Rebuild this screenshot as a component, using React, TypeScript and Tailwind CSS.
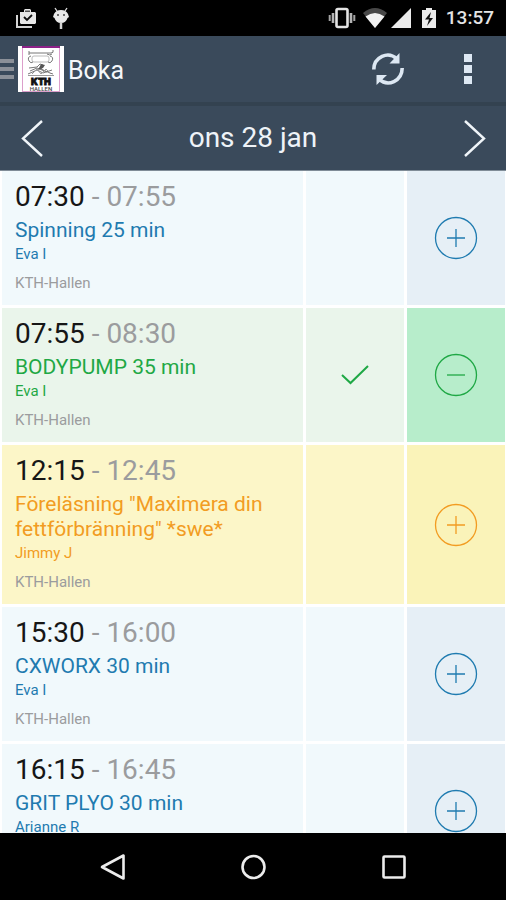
import React, { useState } from 'react';

type Status = 'open' | 'booked' | 'waiting';

interface Session {
  id: number;
  start: string;
  end: string;
  title: string;
  instructor: string;
  location: string;
  status: Status;
}

const initialSessions: Session[] = [
  { id: 1, start: '07:30', end: '07:55', title: 'Spinning 25 min', instructor: 'Eva I', location: 'KTH-Hallen', status: 'open' },
  { id: 2, start: '07:55', end: '08:30', title: 'BODYPUMP 35 min', instructor: 'Eva I', location: 'KTH-Hallen', status: 'booked' },
  { id: 3, start: '12:15', end: '12:45', title: 'Föreläsning "Maximera din fettförbränning" *swe*', instructor: 'Jimmy J', location: 'KTH-Hallen', status: 'waiting' },
  { id: 4, start: '15:30', end: '16:00', title: 'CXWORX 30 min', instructor: 'Eva I', location: 'KTH-Hallen', status: 'open' },
  { id: 5, start: '16:15', end: '16:45', title: 'GRIT PLYO 30 min', instructor: 'Arianne R', location: 'KTH-Hallen', status: 'open' },
];

const theme = {
  open: { cell: 'bg-[#f1f9fc]', action: 'bg-[#e6eff6]', text: 'text-[#1f7bb0]' },
  booked: { cell: 'bg-[#eaf5eb]', action: 'bg-[#b7edcb]', text: 'text-[#1fa845]' },
  waiting: { cell: 'bg-[#fcf6c8]', action: 'bg-[#faf3b9]', text: 'text-[#f29c22]' },
};

const StatusBar: React.FC = () => (
  <div className="h-9 shrink-0 bg-black flex items-center justify-between pl-4 pr-3">
    <div className="flex items-center gap-4">
      <svg width="20" height="20" viewBox="0 0 20 20">
        <path d="M1 7v12h15" fill="none" stroke="#d4d4d4" strokeWidth="2" />
        <path d="M4 4h4V2l1-1h5l1 1v2h4l1 1v10l-1 1H5l-1-1z" fill="#e8e8e8" />
        <path d="M9 4V2.500h5V4z" fill="#555" />
        <path d="M8 9l3 3 5-5" fill="none" stroke="#111" strokeWidth="1.800" />
      </svg>
      <svg width="18" height="24" viewBox="0 0 18 24">
        <path d="M3 2l2 3M15 2l-2 3" stroke="#e0e0e0" strokeWidth="1.300" />
        <path d="M2 8Q4 4 9 4t7 4l1 3-1.500 1Q14 17 9 17t-6.500-5L1 11z" fill="#e8e8e8" />
        <path d="M9 16v7" stroke="#d4d4d4" strokeWidth="2.500" />
        <circle cx="6" cy="9" r="1" fill="#444" />
        <circle cx="12" cy="9" r="1" fill="#444" />
      </svg>
    </div>
    <div className="flex items-center">
      <svg width="28" height="22" viewBox="0 0 28 22">
        <rect x="8.500" y="2" width="11" height="18" rx="1.500" fill="none" stroke="#e4e4e4" strokeWidth="2.600" />
        <path d="M5 6v10M23 6v10" stroke="#b4b4b4" strokeWidth="2.600" />
        <path d="M1.700 8v6M26.300 8v6" stroke="#a4a4a4" strokeWidth="2" />
      </svg>
      <svg className="ml-[7px]" width="24" height="22" viewBox="0 0 24 22">
        <path d="M0 6Q12-4 24 6L12 21z" fill="#484848" />
        <path d="M2.500 9.500Q12 2.500 21.500 9.500L12 21z" fill="#f2f2f2" />
      </svg>
      <svg className="ml-1" width="20" height="22" viewBox="0 0 20 22">
        <path d="M20 1v20H0z" fill="#ebebeb" />
      </svg>
      <svg className="ml-[11px]" width="14" height="22" viewBox="0 0 14 22">
        <path d="M0 3h4V1h6v2h4v18H0z" fill="#ebebeb" />
        <path d="M9 5L3 12.500h4L5 19 11 11H7.500z" fill="#111" />
      </svg>
      <span className="ml-2 w-[50px] text-right text-[19px] leading-6 font-medium text-[#e4e4e4]">13:57</span>
    </div>
  </div>
);

const Logo: React.FC = () => (
  <svg width="46" height="46" viewBox="0 0 46 46" className="shrink-0">
    <rect width="46" height="46" fill="#fff" />
    <path d="M4.500 1v44M41.500 1v44M4 45.500h38" stroke="#dc9fcb" fill="none" />
    <path d="M4 1h38" stroke="#8d2288" strokeWidth="2" />
    <g fill="none" stroke="#777" strokeWidth="1">
      <path d="M11 7h22q3 0 2-3M11 5v4M34 8q-2 2-5 0" />
      <rect x="14" y="10" width="17" height="6" rx="2" stroke="#bbb" />
      <path d="M13 10q-4 1-2 5 2 3 4 1M32 10q4 1 2 5-2 3-4 1" />
      <path d="M11 22l8-1 3-3 3 1-2 4 9 4 3 1M10 28l9-4 6 3 9-3M12 25l7-3 10 4" />
      <path d="M10 29.500h26M14 28l5-5 4 5 5-5 5 5" stroke="#999" />
    </g>
    <path d="M23 18l4 1-2 3-5 2z" fill="#555" />
    <text x="23" y="38.500" textAnchor="middle" fontFamily="Inter, sans-serif" fontSize="9" fontWeight="900" stroke="#111" strokeWidth=".800" fill="#111">KTH</text>
    <text x="23" y="45" textAnchor="middle" fontFamily="Roboto, sans-serif" fontSize="6" fontWeight="500" fill="#444">HALLEN</text>
  </svg>
);

const ActionBar: React.FC = () => (
  <header className="h-[70px] shrink-0 bg-[#3a4a5b] border-b-4 border-[#334250] flex items-center pr-3.5">
    <button type="button" aria-label="Meny" className="flex items-center gap-1">
      <svg width="14" height="22" viewBox="0 0 14 22">
        <path d="M0 3h14M0 11h14M0 19h14" stroke="#8b9098" strokeWidth="4" />
      </svg>
      <Logo />
    </button>
    <h1 className="ml-1 pt-1 flex-1 text-[25px] leading-8 text-[#f4f7fa]">Boka</h1>
    <button type="button" aria-label="Uppdatera" className="w-12 h-12 flex items-center justify-center">
      <svg width="34" height="34" viewBox="0 0 34 34">
        <g fill="none" stroke="#dde8f3" strokeWidth="3.600">
          <path d="M2.800 17.500C3 5 17-1.500 26 7" />
          <path d="M31.200 16C31 29 17 35.500 8 27" />
        </g>
        <path d="M28.500 1v10.500H18.500z" fill="#dde8f3" />
        <path d="M5.500 33V23H16z" fill="#dde8f3" />
      </svg>
    </button>
    <button type="button" aria-label="Fler alternativ" className="ml-8 w-12 h-12 flex items-center justify-center">
      <svg width="8" height="30" viewBox="0 0 8 30">
        <path d="M0 0h8v8H0zM0 11h8v8H0zM0 22h8v8H0z" fill="#dde8f3" />
      </svg>
    </button>
  </header>
);

const DateBar: React.FC = () => (
  <nav className="h-[65px] shrink-0 bg-[#3a4a5b] border-b border-[#808c97] flex items-center justify-between px-5">
    <button type="button" aria-label="Föregående dag">
      <svg width="24" height="40" viewBox="0 0 24 40">
        <path d="M22 3L3 20.500 22 38" fill="none" stroke="#f0f5f9" strokeWidth="2.400" />
      </svg>
    </button>
    <h2 className="text-[28px] leading-9 text-[#eef3f8]">ons 28 jan</h2>
    <button type="button" aria-label="Nästa dag">
      <svg width="24" height="40" viewBox="0 0 24 40">
        <path d="M3 3L22 20.500 3 38" fill="none" stroke="#f0f5f9" strokeWidth="2.400" />
      </svg>
    </button>
  </nav>
);

interface RowProps {
  session: Session;
  onToggle: (id: number) => void;
}

const SessionRow: React.FC<RowProps> = ({ session, onToggle }) => {
  const { cell, action, text } = theme[session.status];
  const booked = session.status === 'booked';

  return (
    <li className="grid grid-cols-[1fr_98px_98px] gap-[3px] shrink-0">
      <div className={`${cell} pt-2 pb-3 pl-[13px] pr-3`}>
        <p className="text-[28px] leading-9 text-[#9b9c9e]">
          <span className="text-[#161616]">{session.start}</span> - {session.end}
        </p>
        <h3 className={`${text} mt-[3px] text-[21px] leading-[25px]`}>{session.title}</h3>
        <p className={`${text} text-[15px] leading-[22px]`}>{session.instructor}</p>
        <p className="mt-2 text-[15px] leading-5 text-[#9b9c9e]">{session.location}</p>
      </div>
      <div className={`${cell} flex items-center justify-center`}>
        {booked && (
          <svg width="28" height="20" viewBox="0 0 28 20" className={text} role="img" aria-label="Bokad">
            <path d="M1 10l8.500 8L27 1" fill="none" stroke="currentColor" strokeWidth="2" />
          </svg>
        )}
      </div>
      <button
        type="button"
        aria-label={`${booked ? 'Avboka' : 'Boka'} ${session.title}`}
        onClick={() => onToggle(session.id)}
        className={`${action} ${text} flex items-center justify-center`}
      >
        <svg width="44" height="44" viewBox="0 0 44 44" fill="none" stroke="currentColor">
          <circle cx="22" cy="22" r="20.500" strokeWidth="1.300" />
          <path d={booked ? 'M13 22h18' : 'M13 22h18M22 13v18'} strokeWidth="1.300" />
        </svg>
      </button>
    </li>
  );
};

const SystemNav: React.FC = () => (
  <div className="h-[67px] shrink-0 bg-black flex items-center justify-center gap-[100px]">
    <button type="button" aria-label="Tillbaka" className="w-10 flex justify-center">
      <svg width="28" height="30" viewBox="0 0 28 30">
        <path d="M24.500 3.500v23L3 15z" fill="none" stroke="#ececec" strokeWidth="2.600" strokeLinejoin="round" />
      </svg>
    </button>
    <button type="button" aria-label="Hem" className="w-10 flex justify-center">
      <svg width="28" height="28" viewBox="0 0 28 28">
        <circle cx="14.500" cy="14" r="11" fill="none" stroke="#ececec" strokeWidth="2.600" />
      </svg>
    </button>
    <button type="button" aria-label="Senaste appar" className="w-10 flex justify-center">
      <svg width="28" height="28" viewBox="0 0 28 28">
        <rect x="4.500" y="3.500" width="21" height="21" rx="1" fill="none" stroke="#ececec" strokeWidth="2.600" />
      </svg>
    </button>
  </div>
);

const App: React.FC = () => {
  const [sessions, setSessions] = useState<Session[]>(initialSessions);

  const toggleBooking = (id: number) => {
    setSessions(prev =>
      prev.map(s => (s.id === id ? { ...s, status: s.status === 'booked' ? 'open' : 'booked' } : s))
    );
  };

  return (
    <div className="h-dvh flex flex-col bg-white font-[Roboto,sans-serif]">
      <StatusBar />
      <ActionBar />
      <DateBar />
      {/* Class schedule */}
      <main className="flex-1 min-h-0 overflow-y-auto [scrollbar-width:none]">
        <ul className="flex flex-col gap-[3px] pl-0.5 pr-px">
          {sessions.map(session => (
            <SessionRow key={session.id} session={session} onToggle={toggleBooking} />
          ))}
        </ul>
      </main>
      <SystemNav />
    </div>
  );
};

export default App;
